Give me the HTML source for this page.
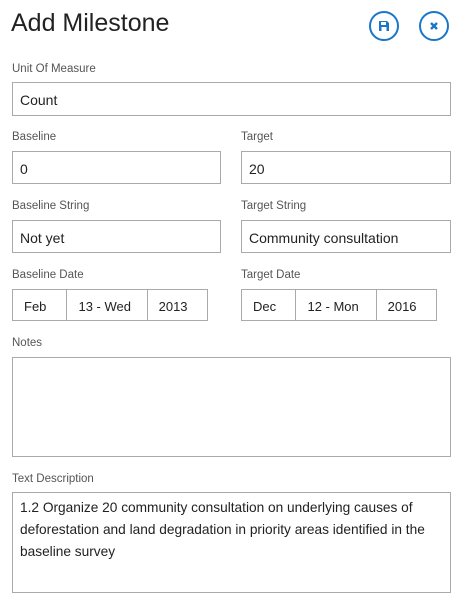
<!DOCTYPE html>
<html><head><style>
body{margin:0;width:465px;height:603px;background:#fff;font-family:"Liberation Sans",sans-serif;color:#222;position:relative;overflow:hidden}
.a{position:absolute}
.lbl{position:absolute;font-size:11.5px;color:#555}
.in{position:absolute;border:1px solid #aaa;box-sizing:border-box;font-size:14px;color:#222;padding-left:7px;display:flex;align-items:center;padding-top:2px}
.d{position:absolute;border:1px solid #aaa;box-sizing:border-box;height:32px;display:flex;font-size:13px}
.d div{border-right:1px solid #aaa;display:flex;align-items:center;padding-left:11px;box-sizing:border-box;padding-top:3px}
.d div:last-child{border-right:none}
</style></head><body>
<div class="a" style="left:11px;top:9px;font-size:25px;color:#222">Add Milestone</div>
<svg class="a" style="left:369px;top:11px" width="30" height="30" viewBox="0 0 30 30"><circle cx="15" cy="15" r="14" fill="none" stroke="#1976c8" stroke-width="2"/><path d="M10 10h8l2 2v8h-10z" fill="#1976c8"/><rect x="12" y="11" width="5" height="3" fill="#fff"/><rect x="12.5" y="16" width="5" height="4" fill="#fff"/></svg>
<svg class="a" style="left:419px;top:11px" width="30" height="30" viewBox="0 0 30 30"><circle cx="15" cy="15" r="14" fill="none" stroke="#1976c8" stroke-width="2"/><path d="M12 12l6 6M18 12l-6 6" stroke="#1976c8" stroke-width="2.4"/></svg>
<div class="lbl" style="left:12px;top:63px">Unit Of Measure</div>
<div class="in" style="left:12px;top:82px;width:439px;height:34px">Count</div>
<div class="lbl" style="left:12px;top:131px">Baseline</div>
<div class="lbl" style="left:241px;top:131px">Target</div>
<div class="in" style="left:12px;top:151px;width:209px;height:33px">0</div>
<div class="in" style="left:241px;top:151px;width:210px;height:33px">20</div>
<div class="lbl" style="left:12px;top:200px">Baseline String</div>
<div class="lbl" style="left:241px;top:200px">Target String</div>
<div class="in" style="left:12px;top:220px;width:209px;height:33px">Not yet</div>
<div class="in" style="left:241px;top:220px;width:210px;height:33px">Community consultation</div>
<div class="lbl" style="left:12px;top:269px">Baseline Date</div>
<div class="lbl" style="left:241px;top:269px">Target Date</div>
<div class="d" style="left:12px;top:289px;width:196px"><div style="width:55px">Feb</div><div style="width:81px">13 - Wed</div><div style="width:60px">2013</div></div>
<div class="d" style="left:241px;top:289px;width:196px"><div style="width:55px">Dec</div><div style="width:81px">12 - Mon</div><div style="width:60px">2016</div></div>
<div class="lbl" style="left:12px;top:337px">Notes</div>
<div class="in" style="left:12px;top:357px;width:439px;height:100px"></div>
<div class="lbl" style="left:12px;top:473px">Text Description</div>
<div class="in" style="left:12px;top:492px;width:439px;height:101px;align-items:flex-start;padding-top:4px;line-height:22px;font-size:13.7px;padding-right:6px">1.2 Organize 20 community consultation on underlying causes of deforestation and land degradation in priority areas identified in the baseline survey</div>
</body></html>
